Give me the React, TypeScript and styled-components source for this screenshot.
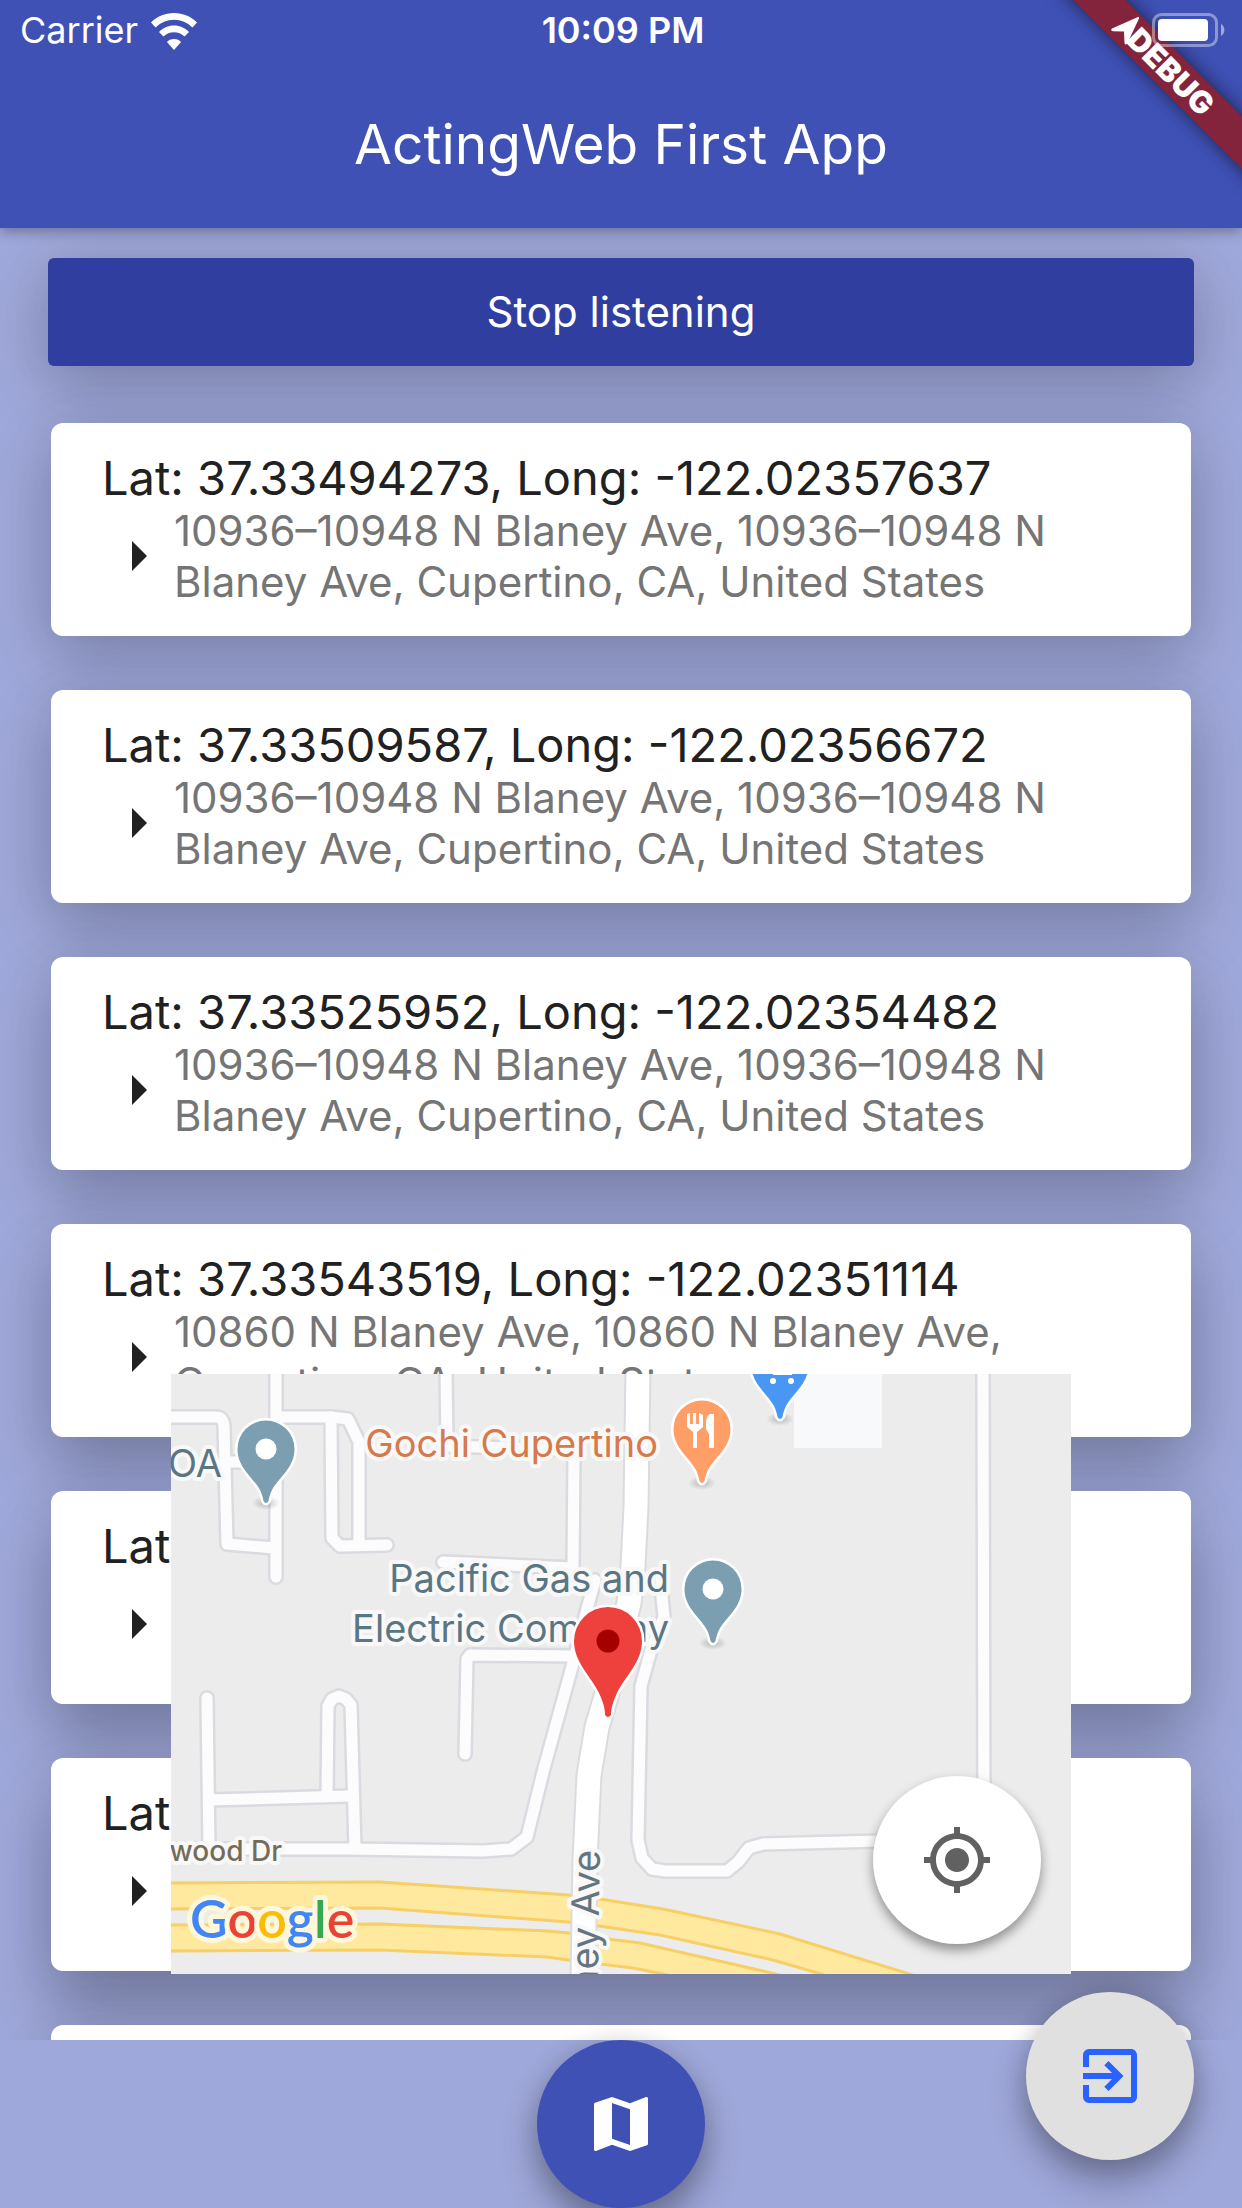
import React from "react";
import styled, { createGlobalStyle } from "styled-components";
import { MdArrowRight, MdExitToApp, MdMap, MdMyLocation } from "react-icons/md";

const GlobalStyle = createGlobalStyle`
  *, *::before, *::after { box-sizing: border-box; }
  body {
    margin: 0;
    background: #9fa8da;
    font-family: Inter, "Liberation Sans", sans-serif;
  }
`;

const Screen = styled.div`
  position: relative;
  display: flex;
  flex-direction: column;
  height: 100vh;
  overflow: hidden;
  background: #9fa8da;
`;

const AppBar = styled.header`
  position: relative;
  z-index: 2;
  display: flex;
  flex-direction: column;
  flex: none;
  background: #3f51b5;
  color: #fff;
  box-shadow: 0 4px 12px rgba(0, 0, 0, 0.3);
`;

const StatusBar = styled.div`
  position: relative;
  z-index: 1;
  display: grid;
  grid-template-columns: 1fr auto 1fr;
  align-items: center;
  height: 60px;
  padding: 0 16px 0 20px;
  font-size: 36px;
  line-height: 60px;
`;

const Carrier = styled.div`
  display: flex;
  align-items: center;
  gap: 13px;
`;

const Clock = styled.time`
  font-weight: 600;
`;

const Indicators = styled.div`
  display: flex;
  justify-content: flex-end;
  align-items: center;
  gap: 12px;
`;

const Title = styled.h1`
  margin: 0;
  height: 168px;
  font-size: 55px;
  font-weight: 400;
  line-height: 168px;
  text-align: center;
`;

const Ribbon = styled.div`
  position: absolute;
  top: 53px;
  right: -69px;
  width: 280px;
  height: 37px;
  background: #83243c;
  box-shadow: 0 0 18px rgba(0, 0, 0, 0.6);
  transform: rotate(45deg);
  font-size: 31px;
  font-weight: 900;
  line-height: 37px;
  text-align: center;
`;

const Content = styled.main`
  flex: 1;
  min-height: 0;
  overflow: auto;
  scrollbar-width: none;
  padding: 30px 48px;
`;

const ListenButton = styled.button`
  display: block;
  width: 100%;
  height: 108px;
  border: 0;
  border-radius: 6px;
  background: #303f9f;
  color: #fff;
  font: 400 42px/106px Inter, "Liberation Sans", sans-serif;
  box-shadow: 0 0 54px rgba(0, 0, 0, 0.07), 0 24px 66px rgba(0, 0, 0, 0.2);
`;

const CardList = styled.ul`
  display: flex;
  flex-direction: column;
  gap: 54px;
  margin: 57px 3px 0;
  padding: 0;
  list-style: none;
`;

/* The shadow falls further and gets denser the lower the card sits. */
const Card = styled.li<{ $depth: number }>`
  padding: 28px 48px 29px 51px;
  border-radius: 12px;
  background: #fff;
  box-shadow:
    0 0 54px rgba(0, 0, 0, 0.07),
    0 ${(p) => 24 + p.$depth * 4}px 66px rgba(0, 0, 0, ${(p) => (20 + p.$depth) / 100});
`;

const Coordinates = styled.h2`
  margin: 0;
  min-height: 54px;
  color: #212121;
  font-size: 47px;
  font-weight: 400;
  line-height: 54px;
`;

const Place = styled.div`
  display: flex;
  align-items: center;
  color: #212121;
  svg { flex: none; }
`;

const Address = styled.p`
  flex: 1;
  margin: 0;
  min-height: 102px;
  color: #757575;
  font-size: 42px;
  line-height: 51px;
`;

const BottomBar = styled.nav`
  position: relative;
  z-index: 1;
  display: flex;
  flex: none;
  justify-content: center;
  background: #9fa8da;
`;

const Fab = styled.button<{ $bg: string; $fg: string; $small?: boolean }>`
  display: flex;
  align-items: center;
  justify-content: center;
  width: 168px;
  height: 168px;
  padding: 0;
  border: 0;
  border-radius: 50%;
  background: ${(p) => p.$bg};
  color: ${(p) => p.$fg};
  box-shadow: ${(p) =>
    p.$small
      ? "0 6px 12px rgba(0, 0, 0, 0.4)"
      : "0 0 24px rgba(0, 0, 0, 0.1), 0 20px 36px rgba(0, 0, 0, 0.32)"};
`;

const ExitSlot = styled.div`
  position: absolute;
  z-index: 3;
  right: 48px;
  bottom: 48px;
`;

const MapPanel = styled.section`
  position: absolute;
  z-index: 1;
  left: 50%;
  bottom: 234px;
  width: 900px;
  height: 600px;
  margin-left: -450px;
  overflow: hidden;
  background: #ececec;
`;

const LocateSlot = styled.div`
  position: absolute;
  right: 30px;
  bottom: 30px;
`;

const MapLabel = styled.text`
  font-family: Inter, "Liberation Sans", sans-serif;
  paint-order: stroke;
  stroke: #f8f8f8;
  stroke-width: 8px;
  stroke-linejoin: round;
`;

const Wordmark = styled.text`
  font-family: Lato, "Liberation Sans", sans-serif;
  font-size: 52px;
  font-weight: 600;
  paint-order: stroke;
  stroke: #fff7dc;
  stroke-width: 10px;
  stroke-linejoin: round;
`;

const WifiIcon = () => (
  <svg width="46" height="40" viewBox="0 0 46 40" fill="#fff" aria-hidden="true">
    <path d="M23 3C14 3 6 6.500 0 12.500L4.500 17.500A26 26 0 0 1 41.500 17.500L46 12.500C40 6.500 32 3 23 3Z" />
    <path d="M23 15.500C17 15.500 12 18 8 22L12.500 26.500A15 15 0 0 1 33.500 26.500L38 22C34 18 29 15.500 23 15.500Z" />
    <path d="M23 29C20 29 17.500 30 16 32L23 40L30 32C28.500 30 26 29 23 29Z" />
  </svg>
);

const LocationArrow = () => (
  <svg width="29" height="29" viewBox="0 0 29 29" fill="#fff" aria-hidden="true">
    <path d="M27 1L1 12.500Q-1 14.500 2 15.200L13 15.500L13.500 27Q14.500 30 16.500 27L28 2.500Q28.500 0.500 27 1Z" />
  </svg>
);

const BatteryIcon = () => (
  <svg width="74" height="34" viewBox="0 0 74 34" aria-hidden="true">
    <rect x="1.500" y="1.500" width="63" height="31" rx="8" fill="none" stroke="#fff" strokeOpacity="0.4" strokeWidth="3" />
    <rect x="6" y="6" width="50" height="22" rx="4" fill="#fff" />
    <path d="M69 11A7 7 0 0 1 69 23Z" fill="#fff" fillOpacity="0.5" />
  </svg>
);

const minorRoads = [
  "M105-5V203",
  "M-5 43H45Q52 43 53 52L56 170L103 174",
  "M56 88H105",
  "M105 43L160 43L177 45L188 68L188 171",
  "M160 43L161 164L169 172L216 171",
  "M275-5L276 72L403 76L402 194L272 188",
  "M424 206L416 235L402 289L372 398L356 463L340 475L312 477L179 475L-5 475",
  "M402 282L299 281L296 285L294 380",
  "M490 205L491 223L493 243L480 276L470 312L467 466L471 484L481 495L494 497L556 497L567 488L578 474L592 470L709 467L813 465L812-5",
  "M36 324L38 475",
  "M38 426L179 422",
  "M156 422L157 332L161 325L168 322L175 325L180 331L184 475",
];

const avenue = "M467-5L465 133L462 193L458 229L437 316L426 353L418 401L414 486L412 605";

const pinShape =
  "M-28.500 0A28.500 28.500 0 1 1 28.500 0C28.500 19 13 28 6 41C4 45 3 49 2.500 52Q0 56-2.500 52C-3 49-4 45-6 41C-13 28-28.500 19-28.500 0Z";

type PinProps = { x: number; y: number; color: string; children?: React.ReactNode };

const Pin = ({ x, y, color, children }: PinProps) => (
  <g transform={`translate(${x} ${y})`}>
    <ellipse cx="0" cy="54" rx="14" ry="7" fill="url(#pin-shade)" />
    <path d={pinShape} fill={color} stroke="#fff" strokeWidth="5" paintOrder="stroke" />
    {children}
  </g>
);

const MapDrawing = () => (
  <svg width="900" height="600" viewBox="0 0 900 600" role="img" aria-label="Map of Cupertino">
    <defs>
      <radialGradient id="pin-shade">
        <stop offset="0.3" stopColor="#000" stopOpacity="0.16" />
        <stop offset="1" stopColor="#000" stopOpacity="0" />
      </radialGradient>
    </defs>
    <path d="M623 0H711V74H623Z" fill="#f8f9fb" />
    <g fill="none" strokeLinejoin="round" strokeLinecap="round">
      <g stroke="#dadbe0" strokeWidth="16">
        {minorRoads.map((d) => <path key={d} d={d} />)}
      </g>
      <g stroke="#fcfcfd" strokeWidth="11">
        {minorRoads.map((d) => <path key={d} d={d} />)}
      </g>
    </g>
    <g fill="#ffe99f" stroke="#f7cf65" strokeWidth="3">
      <path d="M-5 509L209 508L398 521L429 525L492 535L609 560L742 601V610H680L650 600L602 586L489 561L428 552L397 548L209 534L-5 535Z" />
      <path d="M-5 551L209 550L377 557L397 559L429 564L469 569L592 597L620 604H510L492 600L462 594L429 590L397 586L376 583L209 576L-5 577Z" />
    </g>
    <g fill="none">
      <path d={avenue} stroke="#dadbe0" strokeWidth="27" />
      <path d={avenue} stroke="#fff" strokeWidth="23" />
    </g>
    <MapLabel x="51" y="103" textAnchor="end" fontSize="38" fill="#5b7683">OA</MapLabel>
    <MapLabel x="487" y="83" textAnchor="end" fontSize="38" fill="#d6794b">Gochi Cupertino</MapLabel>
    <MapLabel x="498" y="218" textAnchor="end" fontSize="38" fill="#5b7683">Pacific Gas and</MapLabel>
    <MapLabel x="498" y="268" textAnchor="end" fontSize="38" fill="#5b7683">Electric Company</MapLabel>
    <MapLabel x="111" y="487" textAnchor="end" fontSize="28" fontWeight="500" fill="#746c59">wood Dr</MapLabel>
    <MapLabel transform="translate(429 476) rotate(-89)" textAnchor="end" fontSize="38" fill="#65757d">ney Ave</MapLabel>
    <Pin x={95} y={75} color="#7b9eb0"><circle r="10.500" fill="#fff" /></Pin>
    <Pin x={542} y={215} color="#7b9eb0"><circle r="10.500" fill="#fff" /></Pin>
    <Pin x={609} y={-9} color="#4a96f3">
      <path d="M-7 9H12V10H-7Z" fill="#fff" />
      <circle cx="-7" cy="16" r="3" fill="#fff" />
      <circle cx="11" cy="16" r="3" fill="#fff" />
    </Pin>
    <Pin x={531} y={55} color="#ff9e67">
      <path
        d="M-15-15L-12-16V-5H-9V-16H-6V-5H-3V-16L1-14V-2L-5 3V19H-9V3L-15-2ZM12-15V19H7V5L4 0V-8Q5-14 8-15Z"
        fill="#fff"
      />
    </Pin>
    <g transform="translate(437 267)">
      <path
        d="M-34 0A34 34 0 1 1 34 0C34 21 18 34 9 52C5 61 3 67 3 74Q0 78-3 74C-3 67-5 61-9 52C-18 34-34 21-34 0Z"
        fill="#ee403c"
        stroke="#fff"
        strokeWidth="5"
        paintOrder="stroke"
      />
      <circle r="11.500" fill="#a50000" />
    </g>
    <Wordmark x="19" y="564">
      <tspan fill="#4285f4">G</tspan>
      <tspan fill="#ea4335">o</tspan>
      <tspan fill="#fbbc05">o</tspan>
      <tspan fill="#4285f4">g</tspan>
      <tspan fill="#34a853">l</tspan>
      <tspan fill="#ea4335">e</tspan>
    </Wordmark>
  </svg>
);

const locations = [
  {
    title: "Lat: 37.33494273, Long: -122.02357637",
    address: "10936–10948 N Blaney Ave, 10936–10948 N Blaney Ave, Cupertino, CA, United States",
  },
  {
    title: "Lat: 37.33509587, Long: -122.02356672",
    address: "10936–10948 N Blaney Ave, 10936–10948 N Blaney Ave, Cupertino, CA, United States",
  },
  {
    title: "Lat: 37.33525952, Long: -122.02354482",
    address: "10936–10948 N Blaney Ave, 10936–10948 N Blaney Ave, Cupertino, CA, United States",
  },
  {
    title: "Lat: 37.33543519, Long: -122.02351114",
    address: "10860 N Blaney Ave, 10860 N Blaney Ave, Cupertino, CA, United States",
  },
  { title: "Lat", address: "" },
  { title: "Lat", address: "" },
  { title: "", address: "" },
];

export default function App() {
  return (
    <Screen>
      <GlobalStyle />
      <AppBar>
        <StatusBar>
          <Carrier>
            Carrier
            <WifiIcon />
          </Carrier>
          <Clock>10:09 PM</Clock>
          <Indicators>
            <LocationArrow />
            <BatteryIcon />
          </Indicators>
        </StatusBar>
        <Title>ActingWeb First App</Title>
        <Ribbon>DEBUG</Ribbon>
      </AppBar>
      <Content>
        <ListenButton type="button">Stop listening</ListenButton>
        <CardList>
          {locations.map((item, i) => (
            <Card key={i} $depth={i}>
              <Coordinates>{item.title}</Coordinates>
              <Place>
                <MdArrowRight size={72} />
                <Address>{item.address}</Address>
              </Place>
            </Card>
          ))}
        </CardList>
      </Content>
      <MapPanel>
        <MapDrawing />
        <LocateSlot>
          <Fab type="button" aria-label="My location" $bg="#fff" $fg="#616161" $small>
            <MdMyLocation size={72} />
          </Fab>
        </LocateSlot>
      </MapPanel>
      <BottomBar>
        <Fab type="button" aria-label="Toggle map" $bg="#3f51b5" $fg="#fff">
          <MdMap size={72} />
        </Fab>
      </BottomBar>
      <ExitSlot>
        <Fab type="button" aria-label="Log out" $bg="#e0e0e0" $fg="#2962ff">
          <MdExitToApp size={72} />
        </Fab>
      </ExitSlot>
    </Screen>
  );
}
